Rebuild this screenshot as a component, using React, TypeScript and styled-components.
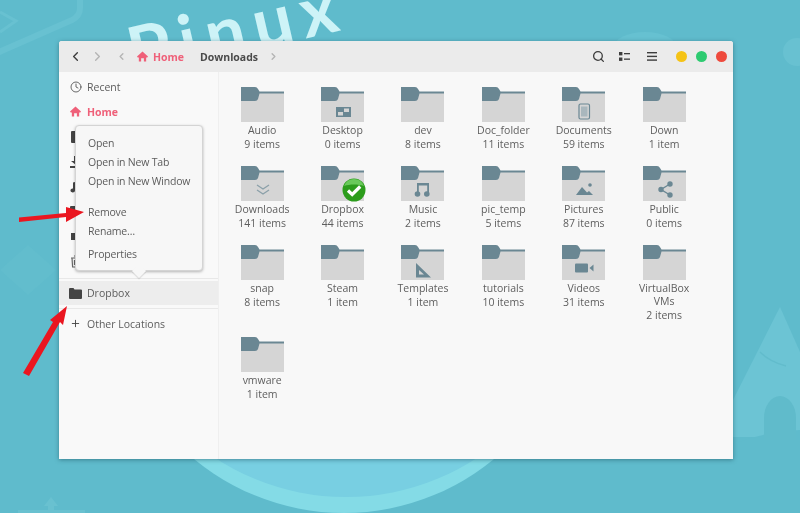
import React from 'react';
import styled, { createGlobalStyle } from 'styled-components';
import { Clock, Search, ChevronLeft, ChevronRight, Plus } from 'lucide-react';

const GlobalStyle = createGlobalStyle`
    html, body {
        margin: 0;
        padding: 0;
    }
    body {
        width: 800px;
        height: 513px;
        overflow: hidden;
        background: #5fbbcc;
        font-family: "Open Sans", "Noto Sans", sans-serif;
    }
`
const Page = styled.div`
    position: relative;
    width: 800px;
    height: 513px;
    padding: 41px 0 0 59px;
    box-sizing: border-box;
    overflow: hidden;
    filter: blur(0.35px);
`
const Wallpaper = styled.svg`
    position: absolute;
    inset: 0;
`
const WallpaperWord = styled.span`
    position: absolute;
    left: 136px;
    top: 16px;
    font-family: "Lato", sans-serif;
    font-weight: 700;
    font-size: 70px;
    line-height: 70px;
    letter-spacing: 9px;
    color: #cdf3f7;
    transform: rotate(-13deg);
    transform-origin: left bottom;
`
const Overlay = styled.svg`
    position: absolute;
    inset: 0;
    pointer-events: none;
`
const Window = styled.div`
    position: relative;
    width: 674px;
    height: 418px;
    display: flex;
    flex-direction: column;
    background: #f8f8f8;
    border-radius: 3px 3px 0 0;
    box-shadow: 0 1px 4px rgba(30, 80, 95, 0.55);
`
const Header = styled.header`
    height: 31px;
    flex: none;
    display: flex;
    align-items: center;
    padding: 0 6px 0 9px;
    background: #ebebeb;
    border-radius: 3px 3px 0 0;
`
const NavButton = styled.span<{ $w: number; $dim?: boolean }>`
    width: ${p => p.$w}px;
    flex: none;
    display: flex;
    align-items: center;
    color: ${p => (p.$dim ? '#b4b4b4' : '#3d3d3d')};
`
const Crumb = styled.span<{ $active?: boolean; $w: number }>`
    width: ${p => p.$w}px;
    flex: none;
    font-size: 10.5px;
    font-weight: 700;
    color: ${p => (p.$active ? '#ef6079' : '#4a4a4a')};
`
const Spacer = styled.div`
    flex: 1;
`
const ToolButton = styled.span<{ $w: number }>`
    width: ${p => p.$w}px;
    flex: none;
    display: flex;
    justify-content: center;
    color: #3d3d3d;
`
const Light = styled.span<{ $c: string; $ml: number }>`
    width: 11px;
    height: 11px;
    flex: none;
    margin-left: ${p => p.$ml}px;
    border-radius: 50%;
    background: ${p => p.$c};
`
const Body = styled.div`
    flex: 1;
    display: flex;
    min-height: 0;
`
const Sidebar = styled.aside`
    width: 160px;
    flex: none;
    padding-top: 2px;
    box-sizing: border-box;
    border-right: 1px solid #efefef;
    background: #f9f9f9;
`
const SideRow = styled.div<{ $active?: boolean; $selected?: boolean }>`
    height: ${p => (p.$selected ? 24 : 25)}px;
    display: flex;
    align-items: center;
    padding-left: 10px;
    font-size: 10.5px;
    font-weight: ${p => (p.$active ? 700 : 400)};
    color: ${p => (p.$active ? '#ef6079' : '#5c5c5c')};
    background: ${p => (p.$selected ? '#ededed' : 'transparent')};
`
const SideIcon = styled.span`
    width: 13px;
    height: 13px;
    margin-right: 5px;
    flex: none;
    display: flex;
    align-items: center;
    justify-content: center;
    color: #444;
`
const Separator = styled.div<{ $top: number; $bottom: number }>`
    height: 1px;
    margin: ${p => p.$top}px 0 ${p => p.$bottom}px;
    background: #e8e8e8;
`
const Popover = styled.div`
    position: absolute;
    left: 16px;
    top: 84px;
    width: 128px;
    height: 146px;
    box-sizing: border-box;
    padding-top: 8px;
    background: #f7f7f7;
    border: 1px solid #d4d4d4;
    border-radius: 4px;
    box-shadow: 0 1px 3px rgba(0, 0, 0, 0.28);
    &::after {
        content: '';
        position: absolute;
        left: 58px;
        bottom: -6px;
        width: 10px;
        height: 10px;
        background: #f7f7f7;
        transform: rotate(45deg);
        box-shadow: 1px 1px 1px rgba(0, 0, 0, 0.12);
    }
`
const MenuItem = styled.div<{ $gap?: number }>`
    height: 19px;
    line-height: 19px;
    margin-top: ${p => p.$gap ?? 0}px;
    padding-left: 12px;
    font-size: 10.5px;
    letter-spacing: -0.2px;
    color: #5c5c5c;
`
const Content = styled.main`
    flex: 1;
    padding: 15px 0 0 3px;
    display: grid;
    grid-template-columns: repeat(6, 80.4px);
    grid-auto-rows: min-content;
    row-gap: 15px;
    align-content: start;
`
const Item = styled.div`
    display: flex;
    flex-direction: column;
    align-items: center;
    text-align: center;
`
const FolderIcon = styled.svg`
    display: block;
    overflow: visible;
    margin-bottom: 2px;
`
const Name = styled.div`
    width: 66px;
    font-size: 10.5px;
    line-height: 13px;
    color: #5e5e5e;
`
const Count = styled.div`
    font-size: 10.5px;
    line-height: 14px;
    color: #5e5e5e;
`

const slate = '#6a8793'

const emblems: Record<string, React.ReactNode> = {
    Desktop: (
        <g>
            <rect x="15" y="20" width="15" height="10" fill={slate} />
            <rect x="17" y="25" width="5" height="3.5" fill="#d5d5d5" />
            <rect x="23" y="21.5" width="5" height="3.5" fill="#d5d5d5" />
        </g>
    ),
    Documents: (
        <g fill="none" stroke={slate}>
            <rect x="17" y="17" width="10.5" height="15" rx="1.5" strokeWidth="1.2" />
            <rect x="19" y="19.5" width="6.5" height="10" fill="#a9b7bd" stroke="none" />
        </g>
    ),
    Downloads: (
        <g fill="none" stroke="#8ba0a9" strokeWidth="1.3">
            <path d="M16 19l6 4 6-4" />
            <path d="M16 24l6 4 6-4" />
        </g>
    ),
    Music: (
        <g fill={slate}>
            <path d="M16 17h12v12h-1.8v-9.5h-8.4V29H16z" />
            <circle cx="16.5" cy="28" r="2.8" />
            <circle cx="25.8" cy="28" r="2.8" />
        </g>
    ),
    Pictures: (
        <g fill={slate}>
            <path d="M14 29l6-8 5 5.5 2-1.5 4 4z" />
            <circle cx="28" cy="19" r="1.8" />
        </g>
    ),
    Public: (
        <g fill={slate} stroke={slate} strokeWidth="1.4">
            <path d="M27 18l-9 5.5 9 5.5" fill="none" />
            <circle cx="27" cy="18" r="2" />
            <circle cx="18" cy="23.5" r="2" />
            <circle cx="27" cy="29" r="2" />
        </g>
    ),
    Templates: (
        <g fill={slate}>
            <path d="M15 18l15 14.5H15zM18 25v4.5h5z" fillRule="evenodd" />
        </g>
    ),
    Videos: (
        <g fill={slate}>
            <rect x="13" y="18.5" width="13" height="9" rx="1" />
            <path d="M27.5 23l4-3.5v7z" />
        </g>
    ),
    Dropbox: (
        <g>
            <circle cx="33" cy="24" r="11.5" fill="#2c9c1c" />
            <path d="M33 13a11 11 0 0 1 10 7c-6-2-14-2-20 0a11 11 0 0 1 10-7z" fill="#69c95a" />
            <path d="M27 24.5l4.2 4 8-8" fill="none" stroke="#fff" strokeWidth="3.2" />
        </g>
    ),
}

const items = [
    ['Audio', '9 items'], ['Desktop', '0 items'], ['dev', '8 items'], ['Doc_folder', '11 items'], ['Documents', '59 items'], ['Down', '1 item'],
    ['Downloads', '141 items'], ['Dropbox', '44 items'], ['Music', '2 items'], ['pic_temp', '5 items'], ['Pictures', '87 items'], ['Public', '0 items'],
    ['snap', '8 items'], ['Steam', '1 item'], ['Templates', '1 item'], ['tutorials', '10 items'], ['Videos', '31 items'], ['VirtualBox VMs', '2 items'],
    ['vmware', '1 item'],
]

function Folder({ name }: { name: string }) {
    return (
        <FolderIcon width="43" height="35" viewBox="0 0 43 35">
            <rect y="5" width="43" height="30" fill="#d5d5d5" />
            <path d="M0 0h14q2 0 3 2l1.5 2.5H43v2H18.5L17 12q-.6 2-3 2H0z" fill={slate} />
            {emblems[name]}
        </FolderIcon>
    )
}

function HomeIcon({ color }: { color: string }) {
    return (
        <svg width="11" height="11" viewBox="0 0 12 12" fill={color}>
            <path d="M6 .5L12 6l-.8 1H10v4.5H7.5V8h-3v3.5H2V7H.8L0 6z" />
        </svg>
    )
}

// rows hidden behind the popover only show the bit of icon sticking out
const hiddenRowIcons: React.ReactNode[] = [
    <svg width="11" height="12" viewBox="0 0 11 12"><rect x="1" width="9" height="12" rx="1" fill="#444" /></svg>,
    <svg width="12" height="12" viewBox="0 0 12 12" fill="#444"><path d="M4 0h4v5h3L6 9 1 5h3zM0 10h12v2H0z" /></svg>,
    <svg width="11" height="12" viewBox="0 0 11 12" fill="#444"><path d="M3 1.5L5 1v8.5a2.3 2 0 1 1-2-2z" /></svg>,
    <svg width="11" height="11" viewBox="0 0 11 11"><rect width="11" height="11" rx="1" fill="#444" /></svg>,
    <svg width="11" height="11" viewBox="0 0 11 11"><rect x="1" y="2" width="9" height="7" fill="#444" /></svg>,
    <svg width="11" height="13" viewBox="0 0 11 13" fill="none" stroke="#666" strokeWidth="1.2"><path d="M1 3h9M2 3l.6 9h5.8L9 3M4 1h3M4.5 5v5M6.5 5v5" /></svg>,
]

export default function App() {
    return (
        <Page>
            <GlobalStyle />
            <Wallpaper width="800" height="513" viewBox="0 0 800 513">
                <defs>
                    <clipPath id="lower">
                        <rect x="0" y="380" width="800" height="133" />
                    </clipPath>
                </defs>
                <g clipPath="url(#lower)">
                    <circle cx="344" cy="278" r="235" fill="#84dbe6" />
                    <circle cx="346" cy="258" r="239" fill="#78cfe2" />
                </g>
                <ellipse cx="645" cy="48" rx="32" ry="16" fill="#66c1d1" />
                <path d="M-10 56L72 20q8-4 8-12V-10" fill="none" stroke="#68c1d1" strokeWidth="6" />
                <path d="M0 12l16 9L0 32" fill="none" stroke="#68c1d1" strokeWidth="3" />
                <path d="M733 400L780 307l40 90v40h-87z" fill="#6cc4d4" />
                <path d="M760 352q10 10 26 14" fill="none" stroke="#62bccc" strokeWidth="1.5" />
                <path d="M733 459v-15q30-12 67-14v83h-67z" fill="#5fbbcc" />
                <path d="M764 440v-22a16 22 0 0 1 32 0v22z" fill="#60bbcb" />
                <path d="M51 497l7 9h-4v4h-6v-4h-4z" fill="#69c1d0" />
                <rect x="18" y="510" width="67" height="3" fill="#69c1d0" />
                <circle cx="797" cy="52" r="14" fill="#68c1d1" />
                <path d="M0 270l28-25 28 25-28 25z" fill="#62bdcd" />
            </Wallpaper>
            <WallpaperWord>Pinux</WallpaperWord>
            <Window>
                <Header>
                    <NavButton $w={22}><ChevronLeft size={15} strokeWidth={2.2} /></NavButton>
                    <NavButton $w={26} $dim><ChevronRight size={15} strokeWidth={2.2} /></NavButton>
                    <NavButton $w={21} $dim><ChevronLeft size={11} strokeWidth={3} /></NavButton>
                    <NavButton $w={16}><HomeIcon color="#ef6079" /></NavButton>
                    <Crumb $active $w={47}>Home</Crumb>
                    <Crumb $w={68}>Downloads</Crumb>
                    <NavButton $w={14} $dim><ChevronRight size={11} strokeWidth={3} /></NavButton>
                    <Spacer />
                    <ToolButton $w={26}><Search size={13} strokeWidth={2.4} /></ToolButton>
                    <ToolButton $w={27}>
                        <svg width="11" height="9" viewBox="0 0 11 9" fill="#3d3d3d">
                            <rect width="3.4" height="3.4" />
                            <rect y="5.5" width="3.4" height="3.4" />
                            <rect x="5" y="1" width="6" height="1.3" />
                            <rect x="5" y="6.5" width="6" height="1.3" />
                        </svg>
                    </ToolButton>
                    <ToolButton $w={27}>
                        <svg width="10" height="9" viewBox="0 0 10 9" fill="#3d3d3d">
                            <rect width="10" height="1.4" />
                            <rect y="3.7" width="10" height="1.4" />
                            <rect y="7.4" width="10" height="1.4" />
                        </svg>
                    </ToolButton>
                    <Light $c="#f5c316" $ml={11} />
                    <Light $c="#2ecb71" $ml={9} />
                    <Light $c="#ee4a3d" $ml={9} />
                </Header>
                <Body>
                    <Sidebar>
                        <SideRow><SideIcon><Clock size={12} strokeWidth={1.6} /></SideIcon>Recent</SideRow>
                        <SideRow $active><SideIcon><HomeIcon color="#ef6079" /></SideIcon>Home</SideRow>
                        {hiddenRowIcons.map((icon, i) => (
                            <SideRow key={i}><SideIcon>{icon}</SideIcon></SideRow>
                        ))}
                        <Separator $top={4} $bottom={2} />
                        <SideRow $selected>
                            <SideIcon>
                                <svg width="13" height="11" viewBox="0 0 13 11" fill="#444">
                                    <path d="M0 1q0-1 1-1h3.5l1 1.5H12q1 0 1 1V10q0 1-1 1H1q-1 0-1-1z" />
                                </svg>
                            </SideIcon>
                            Dropbox
                        </SideRow>
                        <Separator $top={3} $bottom={2} />
                        <SideRow><SideIcon><Plus size={11} strokeWidth={2} /></SideIcon>Other Locations</SideRow>
                    </Sidebar>
                    <Content>
                        {items.map(([name, count]) => (
                            <Item key={name}>
                                <Folder name={name} />
                                <Name>{name}</Name>
                                <Count>{count}</Count>
                            </Item>
                        ))}
                    </Content>
                </Body>
                <Popover>
                    <MenuItem>Open</MenuItem>
                    <MenuItem>Open in New Tab</MenuItem>
                    <MenuItem>Open in New Window</MenuItem>
                    <MenuItem $gap={12}>Remove</MenuItem>
                    <MenuItem>Rename…</MenuItem>
                    <MenuItem $gap={4}>Properties</MenuItem>
                </Popover>
            </Window>
            <Overlay width="800" height="513" viewBox="0 0 800 513">
                <path d="M19 217.5L66 213v-6l18 5-18 10v-5L19 222z" fill="#ea1620" />
                <path d="M23 373L53 322l-3-2 17-14-4 19-3-3-31 54z" fill="#ea1620" />
            </Overlay>
        </Page>
    )
}
